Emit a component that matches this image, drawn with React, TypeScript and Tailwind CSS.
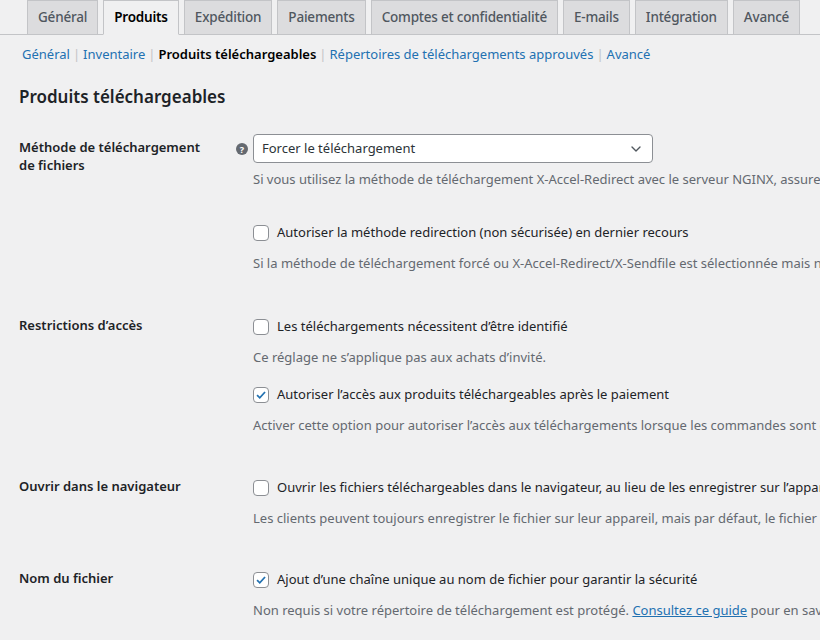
import { ChevronDown } from "lucide-react";
import type { ReactNode } from "react";

const tabs = ["Général", "Produits", "Expédition", "Paiements", "Comptes et confidentialité", "E-mails", "Intégration", "Avancé"];

function Box({ checked }: { checked?: boolean }) {
  return (
    <span className="w-4 h-4 shrink-0 rounded-[4px] border border-[#8c8f94] bg-white flex items-center justify-center">
      {checked && (
        <svg viewBox="0 0 16 16" className="w-4 h-4">
          <path d="M3.5 8.2 6.6 11.2 12.6 4.6" fill="none" stroke="#2271b1" strokeWidth="2" />
        </svg>
      )}
    </span>
  );
}

function Check({ checked, label }: { checked?: boolean; label: string }) {
  return (
    <div className="flex items-center gap-2 h-5">
      <Box checked={checked} />
      <span className="text-[#1d2327]">{label}</span>
    </div>
  );
}

function Desc({ children }: { children: ReactNode }) {
  return <p className="text-[#646970] mt-[10px] leading-5">{children}</p>;
}

function Row({ label, help, children, top }: { label: ReactNode; help?: boolean; children: ReactNode; top: string }) {
  return (
    <div className={`flex ${top}`}>
      <div className="w-[217px] shrink-0 font-semibold text-[#1d2327] leading-[18px] pt-[4px]">{label}</div>
      <div className="w-[17px] shrink-0 pt-[9px]">
        {help && (
          <span className="w-3 h-3 rounded-full bg-[#646970] text-white text-[9px] font-bold flex items-center justify-center leading-none">?</span>
        )}
      </div>
      <div className="flex-1 min-w-0 pt-[5px]">{children}</div>
    </div>
  );
}

export default function App() {
  return (
    <div className="w-[820px] h-[640px] overflow-hidden bg-[#f0f0f1] text-[13px] whitespace-nowrap" style={{ fontFamily: '"Noto Sans", "Open Sans", sans-serif' }}>
      <div className="flex items-end gap-[5px] pl-[27px] border-b border-[#c3c4c7] h-[35px]">
        {tabs.map((t) => (
          <div
            key={t}
            className={`h-[34px] px-[10px] flex items-center text-[13.5px] font-medium tracking-[-0.2px] border border-[#c3c4c7] ${t === "Produits" ? "bg-[#f0f0f1] text-black font-semibold border-b-[#f0f0f1] -mb-px h-[35px]" : "bg-[#dcdcde] text-[#50575e] border-b-0"}`}
          >
            {t}
          </div>
        ))}
      </div>
      <div className="pl-[22px] pt-[10px] text-[13px] flex gap-[3px]">
        <span className="text-[#2271b1]">Général</span><span className="text-[#c3c4c7]">|</span>
        <span className="text-[#2271b1]">Inventaire</span><span className="text-[#c3c4c7]">|</span>
        <span className="text-black font-semibold">Produits téléchargeables</span><span className="text-[#c3c4c7]">|</span>
        <span className="text-[#2271b1]">Répertoires de téléchargements approuvés</span><span className="text-[#c3c4c7]">|</span>
        <span className="text-[#2271b1]">Avancé</span>
      </div>
      <div className="pl-[19px]">
        <h2 className="text-[17px] font-semibold text-[#1d2327] mt-[19px]">Produits téléchargeables</h2>
        <Row top="mt-[25px]" help label={<>Méthode de téléchargement<br />de fichiers</>}>
          <div className="-mt-[5px] w-[400px] h-[29px] bg-white border border-[#8c8f94] rounded-[4px] flex items-center justify-between px-2">
            <span className="text-[#2c3338]">Forcer le téléchargement</span>
            <ChevronDown className="w-4 h-4 text-[#50575e]" />
          </div>
          <p className="text-[#646970] mt-[6px] leading-5">Si vous utilisez la méthode de téléchargement X-Accel-Redirect avec le serveur NGINX, assurez-vous que</p>
          <div className="mt-[34px]"><Check label="Autoriser la méthode redirection (non sécurisée) en dernier recours" /></div>
          <Desc>Si la méthode de téléchargement forcé ou X-Accel-Redirect/X-Sendfile est sélectionnée mais ne fonctionne pas</Desc>
        </Row>
        <Row top="mt-[39px]" label="Restrictions d’accès">
          <Check label="Les téléchargements nécessitent d’être identifié" />
          <Desc>Ce réglage ne s’applique pas aux achats d’invité.</Desc>
          <div className="mt-[18px]"><Check checked label="Autoriser l’accès aux produits téléchargeables après le paiement" /></div>
          <Desc>Activer cette option pour autoriser l’accès aux téléchargements lorsque les commandes sont en cours</Desc>
        </Row>
        <Row top="mt-[38px]" label="Ouvrir dans le navigateur">
          <Check label="Ouvrir les fichiers téléchargeables dans le navigateur, au lieu de les enregistrer sur l’appareil" />
          <Desc>Les clients peuvent toujours enregistrer le fichier sur leur appareil, mais par défaut, le fichier sera ouvert</Desc>
        </Row>
        <Row top="mt-[37px]" label="Nom du fichier">
          <Check checked label="Ajout d’une chaîne unique au nom de fichier pour garantir la sécurité" />
          <Desc>
            Non requis si votre répertoire de téléchargement est protégé. <span className="text-[#2271b1] underline">Consultez ce guide</span> pour en savoir plus
          </Desc>
        </Row>
      </div>
    </div>
  );
}
